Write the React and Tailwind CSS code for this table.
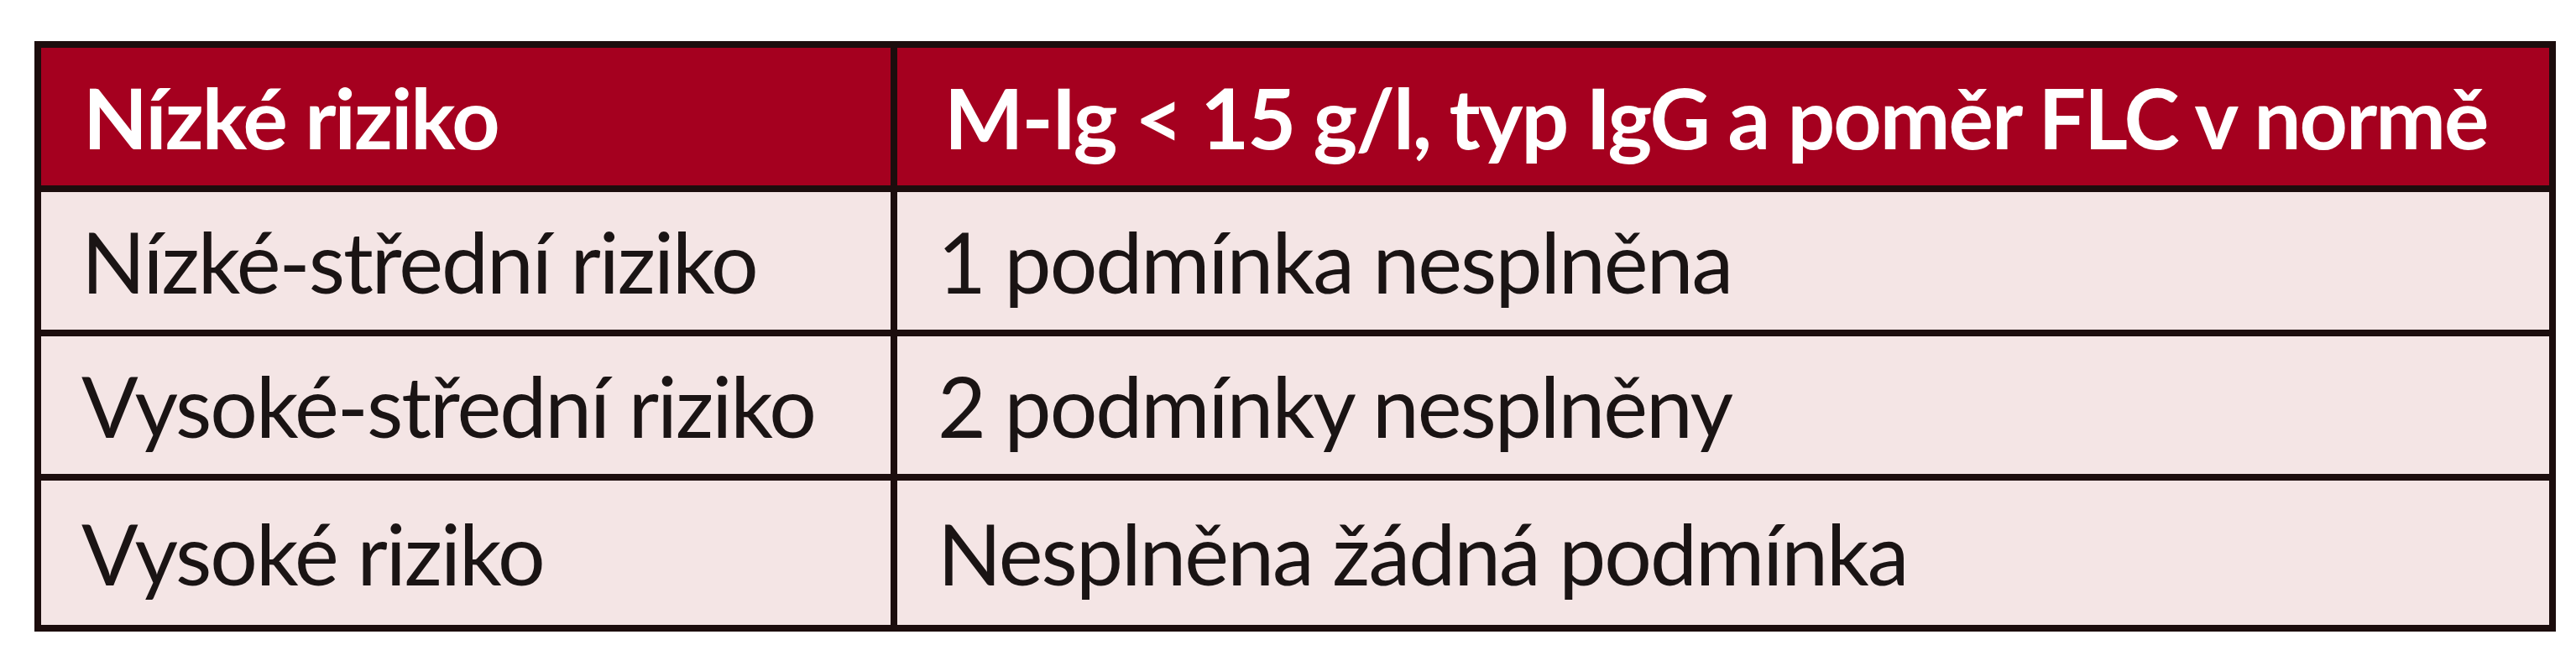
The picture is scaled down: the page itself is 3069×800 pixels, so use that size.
export default function App() {
  const rows = [
    ["Nízké-střední riziko", "1 podmínka nesplněna"],
    ["Vysoké-střední riziko", "2 podmínky nesplněny"],
    ["Vysoké riziko", "Nesplněna žádná podmínka"],
  ];
  return (
    <div className="w-[3069px] h-[800px] bg-white pl-[41px] pt-[49px]" style={{ fontFamily: "Lato, 'Liberation Sans', sans-serif" }}>
      <div className="w-[3004px] border-[8px] border-[#1c0d0d] grid grid-cols-[1020px_1fr] text-[100px] leading-none tracking-[-0.02em]">
        <div className="h-[172px] bg-[#a5001f] text-white font-bold flex items-center pl-[50px] border-r-[8px] border-b-[8px] border-[#1c0d0d]">Nízké riziko</div>
        <div className="h-[172px] bg-[#a5001f] text-white font-bold flex items-center pl-[56px] border-b-[8px] border-[#1c0d0d]">M-Ig &lt; 15 g/l, typ IgG a poměr FLC v normě</div>
        {rows.map((r, i) => (
          <>
            <div key={"a" + i} className={"h-[172px] bg-[#f4e5e5] text-[#1a1414] flex items-center pl-[48px] border-r-[8px] border-[#1c0d0d] " + (i < 2 ? "border-b-[8px]" : "")}>{r[0]}</div>
            <div key={"b" + i} className={"h-[172px] bg-[#f4e5e5] text-[#1a1414] flex items-center pl-[48px] border-[#1c0d0d] " + (i < 2 ? "border-b-[8px]" : "")}>{r[1]}</div>
          </>
        ))}
      </div>
    </div>
  );
}
